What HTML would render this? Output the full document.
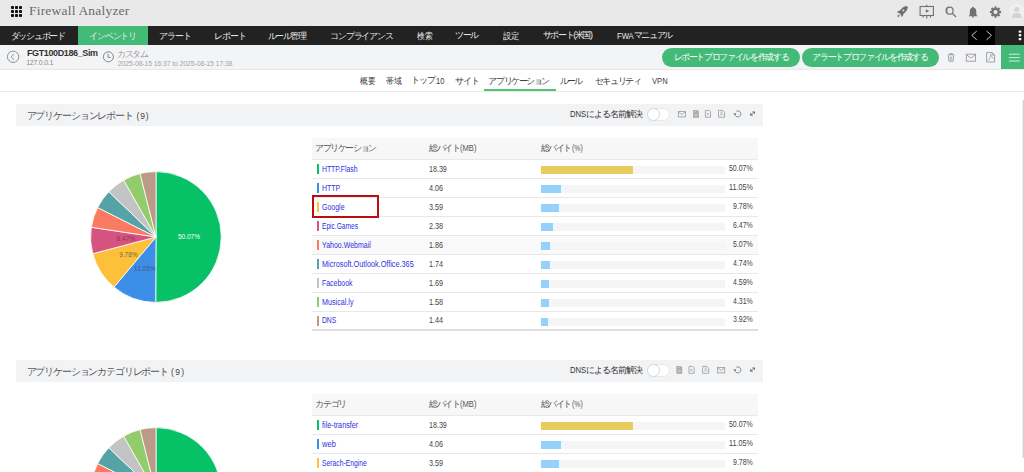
<!DOCTYPE html>
<html><head><meta charset="utf-8">
<style>
*{margin:0;padding:0;box-sizing:border-box}
html,body{width:1024px;height:472px;overflow:hidden;background:#fff;font-family:"Liberation Sans",sans-serif;color:#333}
.a{position:absolute;white-space:nowrap}
#top{position:absolute;left:0;top:0;width:1024px;height:26px;background:#e9e9ea}
#nav{position:absolute;left:0;top:26px;width:1024px;height:19px;background:#222}
#sub{position:absolute;left:0;top:45px;width:1024px;height:25px;background:#f3f4f6;border-bottom:1px solid #e9e9e9}
#tabs{position:absolute;left:0;top:70px;width:1024px;height:22px;border-bottom:1px solid #ebebeb;background:#fff}
.sech{position:absolute;left:16px;width:747px;height:22px;background:#f2f3f5}
.th{position:absolute;left:312px;width:446px;height:22px;background:#f7f7f7;border-bottom:1px solid #e8e8e8}
.row{position:absolute;left:312px;width:446px;height:19px;border-bottom:1px solid #e8e8e8}
.cb{position:absolute;left:317px;width:2px;height:10px}
.tr{position:absolute;left:541px;width:184px;height:8px;background:#f5f5f5}
.bar{position:absolute;left:0;top:0;height:8px}
.btn{position:absolute;height:19px;border-radius:10px;background:#43ba78}
.tog{position:absolute;left:647px;width:23px;height:13px;border-radius:6.5px;background:#fff;border:1px solid #e6e6e6}
.knob{position:absolute;left:-1px;top:-1px;width:13px;height:13px;border-radius:6.5px;background:#fff;border:1px solid #d9d9d9}
</style></head><body>
<div id="top">
  <svg class="a" style="left:11px;top:6px" width="11" height="11" viewBox="0 0 11 11"><g fill="#111"><rect x="0" y="0" width="3" height="3" rx="0.8"/><rect x="4" y="0" width="3" height="3" rx="0.8"/><rect x="8" y="0" width="3" height="3" rx="0.8"/><rect x="0" y="4" width="3" height="3" rx="0.8"/><rect x="4" y="4" width="3" height="3" rx="0.8"/><rect x="8" y="4" width="3" height="3" rx="0.8"/><rect x="0" y="8" width="3" height="3" rx="0.8"/><rect x="4" y="8" width="3" height="3" rx="0.8"/><rect x="8" y="8" width="3" height="3" rx="0.8"/></g></svg>
</div>
<div id="nav">
  <div class="a" style="left:78px;top:0;width:70px;height:19px;background:#43ba76"></div>
  <div class="a" style="left:968px;top:0;width:27px;height:19px;background:#000"></div>
</div>
<div id="sub">
  <div class="btn" style="left:662px;top:3px;width:138px"></div>
  <div class="btn" style="left:802px;top:3px;width:137px"></div>
  <div class="a" style="left:1001px;top:0;width:23px;height:24px;background:#43ba78"></div>
</div>
<div id="tabs">
  <div class="a" style="left:483.5px;top:19px;width:72.5px;height:2px;background:#52c373"></div>
</div>

<svg class="a" style="left:0;top:0" width="1024" height="70" viewBox="0 0 1024 70">
 <!-- rocket -->
 <g fill="#707070">
  <path d="M906.8 5.9 C903.8 6.3 901.4 8.2 899.9 10.6 L898.2 10.9 L896.9 12.6 L899.2 12.9 L901.0 14.7 L901.3 17.0 L903.0 15.7 L903.3 14.0 C905.6 12.5 907.5 10.0 907.9 7.0 Z"/>
  <circle cx="903.4" cy="10.4" r="0.9" fill="#e9e9ea"/>
  <path d="M899.3 14.2 L897.2 15.4 L897.6 16.9 L898.8 17.3 L900.0 15.0 Z" fill="#8a8a8a"/>
 </g>
 <!-- presentation -->
 <g fill="none" stroke="#707070" stroke-width="1.1">
  <rect x="920.1" y="6.5" width="13.3" height="9"/>
  <path d="M926.8 4.8 V6.5 M926.8 15.5 V18.5 M923.5 15.5 L922.8 17.5 M930.1 15.5 L930.8 17.5"/>
 </g>
 <path d="M925.8 9.2 L929.2 11 L925.8 12.8 Z" fill="#707070"/>
 <!-- search -->
 <g fill="none" stroke="#707070" stroke-width="1.2">
  <circle cx="949.6" cy="10.7" r="3.5"/>
  <path d="M952.2 13.3 L956 17"/>
  <path d="M948.2 8.6 A2.4 2.4 0 0 0 948.2 12.8" stroke-width="0.8"/>
 </g>
 <!-- bell -->
 <path d="M973 6.8 C973.6 6.8 973.9 7.3 973.9 7.8 C975.8 8.3 976.3 10.2 976.3 12 L976.4 14.8 L977.5 16.2 L968.6 16.2 L969.7 14.8 L969.8 12 C969.8 10.2 970.3 8.3 972.2 7.8 C972.2 7.3 972.5 6.8 973 6.8 Z M972 16.6 H974 V17.6 H972 Z" fill="#707070"/>
 <!-- gear -->
 <g transform="translate(995.5 12.1)" fill="#707070"><rect x="-1.1" y="-5.6" width="2.2" height="3" transform="rotate(0)"/><rect x="-1.1" y="-5.6" width="2.2" height="3" transform="rotate(45)"/><rect x="-1.1" y="-5.6" width="2.2" height="3" transform="rotate(90)"/><rect x="-1.1" y="-5.6" width="2.2" height="3" transform="rotate(135)"/><rect x="-1.1" y="-5.6" width="2.2" height="3" transform="rotate(180)"/><rect x="-1.1" y="-5.6" width="2.2" height="3" transform="rotate(225)"/><rect x="-1.1" y="-5.6" width="2.2" height="3" transform="rotate(270)"/><rect x="-1.1" y="-5.6" width="2.2" height="3" transform="rotate(315)"/><circle r="4.1"/><circle r="2.1" fill="#e9e9ea"/></g>
 <!-- avatar -->
 <circle cx="1016.8" cy="11.9" r="8.2" fill="#efefef"/>
 <circle cx="1016.8" cy="9.4" r="2.5" fill="#d3d3d3"/>
 <path d="M1011.8 17.5 C1011.8 14.4 1014 13 1016.8 13 C1019.6 13 1021.8 14.4 1021.8 17.5 C1020.5 18.5 1013.1 18.5 1011.8 17.5 Z" fill="#d3d3d3"/>
 <!-- nav chevrons -->
 <path d="M976.8 31 L971.8 35.4 L976.8 39.9 M986.5 31 L991.5 35.4 L986.5 39.9" fill="none" stroke="#c8c8c8" stroke-width="1"/>
 <g fill="#f4f4f4"><rect x="1018.6" y="30.4" width="2.8" height="2.3" rx="0.8"/><rect x="1018.6" y="34.1" width="2.8" height="2.3" rx="0.8"/><rect x="1018.6" y="37.9" width="2.8" height="2.3" rx="0.8"/></g>
 <!-- back circle -->
 <circle cx="13.1" cy="56.8" r="5.7" fill="none" stroke="#7a7a7a" stroke-width="0.8"/>
 <path d="M14.1 53.9 L11.1 56.85 L14.1 59.8" fill="none" stroke="#7a7a7a" stroke-width="0.8"/>
 <!-- clock -->
 <circle cx="108.4" cy="56.8" r="5" fill="none" stroke="#7a7a7a" stroke-width="0.9"/>
 <path d="M108.1 53.6 V57.4 H110.6" fill="none" stroke="#7a7a7a" stroke-width="0.9"/>
 <!-- trash -->
 <g fill="none" stroke="#9a9a9a" stroke-width="0.9">
  <path d="M947.6 54.8 H954.6 M949.8 54.8 V53.6 H952.4 V54.8"/>
  <path d="M948.4 55.6 L948.9 61.2 H953.1 L953.6 55.6"/>
  <path d="M950.3 56.5 V60.2 M951.7 56.5 V60.2" stroke-width="0.7"/>
 </g>
 <!-- mail -->
 <g fill="none" stroke="#9a9a9a" stroke-width="0.9">
  <rect x="966.3" y="54.2" width="9.2" height="7"/>
  <path d="M966.3 54.6 L970.9 58.2 L975.5 54.6"/>
 </g>
 <!-- pdf -->
 <g fill="none" stroke="#9a9a9a" stroke-width="0.9">
  <path d="M986.6 52.6 H992.2 L994.6 55 V62 H986.6 Z M992.2 52.6 V55 H994.6"/>
  <path d="M988 60.8 C989.5 59 990.8 56.5 990.6 54.4 C992 57 992.5 58 994 59.5" stroke-width="0.7"/>
 </g>
 <!-- hamburger -->
 <g stroke="#dff2e7" stroke-width="0.9"><path d="M1008.9 54.2 H1019.7 M1008.9 57.6 H1019.7 M1008.9 61 H1019.7"/></g>
</svg>
<div class="sech" style="top:103.5px"></div><div class="tog" style="top:107.5px"><div class="knob"></div></div><svg class="a" style="left:86.4px;top:166.7px" width="140" height="140" viewBox="-70 -70 140 140"><g font-family="Liberation Sans, sans-serif"><path d="M0 0L0.00 -65.40A65.4 65.4 0 1 1 -0.29 65.40Z" fill="#07c167" stroke="#fff" stroke-width="0.8" stroke-linejoin="round"/><path d="M0 0L-0.29 65.40A65.4 65.4 0 0 1 -42.07 50.08Z" fill="#3d8ee6" stroke="#fff" stroke-width="0.8" stroke-linejoin="round"/><path d="M0 0L-42.07 50.08A65.4 65.4 0 0 1 -63.24 16.66Z" fill="#fdc03a" stroke="#fff" stroke-width="0.8" stroke-linejoin="round"/><path d="M0 0L-63.24 16.66A65.4 65.4 0 0 1 -64.68 -9.70Z" fill="#d6527f" stroke="#fff" stroke-width="0.8" stroke-linejoin="round"/><path d="M0 0L-64.68 -9.70A65.4 65.4 0 0 1 -58.38 -29.47Z" fill="#fb7b62" stroke="#fff" stroke-width="0.8" stroke-linejoin="round"/><path d="M0 0L-58.38 -29.47A65.4 65.4 0 0 1 -47.17 -45.31Z" fill="#55a3a7" stroke="#fff" stroke-width="0.8" stroke-linejoin="round"/><path d="M0 0L-47.17 -45.31A65.4 65.4 0 0 1 -32.33 -56.85Z" fill="#c3c3c3" stroke="#fff" stroke-width="0.8" stroke-linejoin="round"/><path d="M0 0L-32.33 -56.85A65.4 65.4 0 0 1 -15.95 -63.43Z" fill="#92cc6c" stroke="#fff" stroke-width="0.8" stroke-linejoin="round"/><path d="M0 0L-15.95 -63.43A65.4 65.4 0 0 1 -0.00 -65.40Z" fill="#bd9a87" stroke="#fff" stroke-width="0.8" stroke-linejoin="round"/><text x="33" y="2.3" fill="#fff" font-size="6.5" text-anchor="middle">50.07%</text><text x="-11.2" y="33.5" fill="#3a4a6a" fill-opacity="0.8" font-size="6.5" text-anchor="middle">11.05%</text><text x="-27.6" y="19.8" fill="#4a4a3a" fill-opacity="0.8" font-size="6.5" text-anchor="middle">9.78%</text><text x="-30.2" y="4" fill="#5a3a4a" fill-opacity="0.8" font-size="6.5" text-anchor="middle">6.47%</text></g></svg><div class="a" style="left:312px;top:138px;width:446px;height:21px;background:#f7f7f7"></div><div class="a" style="left:312px;top:236px;width:446px;height:18px;background:#f9f9f9"></div><div class="a" style="left:312px;top:159px;width:446px;height:1px;background:#e8e8e8"></div><div class="a" style="left:312px;top:178px;width:446px;height:1px;background:#e8e8e8"></div><div class="a" style="left:312px;top:197px;width:446px;height:1px;background:#e8e8e8"></div><div class="a" style="left:312px;top:216px;width:446px;height:1px;background:#e8e8e8"></div><div class="a" style="left:312px;top:235px;width:446px;height:1px;background:#e8e8e8"></div><div class="a" style="left:312px;top:254px;width:446px;height:1px;background:#e8e8e8"></div><div class="a" style="left:312px;top:273px;width:446px;height:1px;background:#e8e8e8"></div><div class="a" style="left:312px;top:292px;width:446px;height:1px;background:#e8e8e8"></div><div class="a" style="left:312px;top:311px;width:446px;height:1px;background:#e8e8e8"></div><div class="a" style="left:312px;top:329px;width:446px;height:2px;background:#dedede"></div><div class="cb" style="top:164px;background:#07c167"></div><div class="tr" style="top:166px"><div class="bar" style="width:92.1px;background:#e8cd5e"></div></div><div class="cb" style="top:183px;background:#3d8ee6"></div><div class="tr" style="top:185px"><div class="bar" style="width:20.3px;background:#94d2fb"></div></div><div class="cb" style="top:202px;background:#fdc03a"></div><div class="tr" style="top:204px"><div class="bar" style="width:18.0px;background:#94d2fb"></div></div><div class="cb" style="top:221px;background:#d6527f"></div><div class="tr" style="top:223px"><div class="bar" style="width:11.9px;background:#94d2fb"></div></div><div class="cb" style="top:240px;background:#fb7b62"></div><div class="tr" style="top:242px"><div class="bar" style="width:9.3px;background:#94d2fb"></div></div><div class="cb" style="top:259px;background:#55a3a7"></div><div class="tr" style="top:261px"><div class="bar" style="width:8.7px;background:#94d2fb"></div></div><div class="cb" style="top:278px;background:#c3c3c3"></div><div class="tr" style="top:280px"><div class="bar" style="width:8.4px;background:#94d2fb"></div></div><div class="cb" style="top:297px;background:#92cc6c"></div><div class="tr" style="top:299px"><div class="bar" style="width:7.9px;background:#94d2fb"></div></div><div class="cb" style="top:316px;background:#bd9a87"></div><div class="tr" style="top:318px"><div class="bar" style="width:7.2px;background:#94d2fb"></div></div><div class="sech" style="top:359.5px"></div><div class="tog" style="top:363.5px"><div class="knob"></div></div><svg class="a" style="left:86.4px;top:422.7px" width="140" height="140" viewBox="-70 -70 140 140"><g font-family="Liberation Sans, sans-serif"><path d="M0 0L0.00 -65.40A65.4 65.4 0 1 1 -0.29 65.40Z" fill="#07c167" stroke="#fff" stroke-width="0.8" stroke-linejoin="round"/><path d="M0 0L-0.29 65.40A65.4 65.4 0 0 1 -42.07 50.08Z" fill="#3d8ee6" stroke="#fff" stroke-width="0.8" stroke-linejoin="round"/><path d="M0 0L-42.07 50.08A65.4 65.4 0 0 1 -63.24 16.66Z" fill="#fdc03a" stroke="#fff" stroke-width="0.8" stroke-linejoin="round"/><path d="M0 0L-63.24 16.66A65.4 65.4 0 0 1 -64.68 -9.70Z" fill="#d6527f" stroke="#fff" stroke-width="0.8" stroke-linejoin="round"/><path d="M0 0L-64.68 -9.70A65.4 65.4 0 0 1 -58.38 -29.47Z" fill="#fb7b62" stroke="#fff" stroke-width="0.8" stroke-linejoin="round"/><path d="M0 0L-58.38 -29.47A65.4 65.4 0 0 1 -47.17 -45.31Z" fill="#55a3a7" stroke="#fff" stroke-width="0.8" stroke-linejoin="round"/><path d="M0 0L-47.17 -45.31A65.4 65.4 0 0 1 -32.33 -56.85Z" fill="#c3c3c3" stroke="#fff" stroke-width="0.8" stroke-linejoin="round"/><path d="M0 0L-32.33 -56.85A65.4 65.4 0 0 1 -15.95 -63.43Z" fill="#92cc6c" stroke="#fff" stroke-width="0.8" stroke-linejoin="round"/><path d="M0 0L-15.95 -63.43A65.4 65.4 0 0 1 -0.00 -65.40Z" fill="#bd9a87" stroke="#fff" stroke-width="0.8" stroke-linejoin="round"/><text x="33" y="2.3" fill="#fff" font-size="6.5" text-anchor="middle">50.07%</text><text x="-11.2" y="33.5" fill="#3a4a6a" fill-opacity="0.8" font-size="6.5" text-anchor="middle">11.05%</text><text x="-27.6" y="19.8" fill="#4a4a3a" fill-opacity="0.8" font-size="6.5" text-anchor="middle">9.78%</text><text x="-30.2" y="4" fill="#5a3a4a" fill-opacity="0.8" font-size="6.5" text-anchor="middle">6.47%</text></g></svg><div class="a" style="left:312px;top:394px;width:446px;height:21px;background:#f7f7f7"></div><div class="a" style="left:312px;top:492px;width:446px;height:18px;background:#f9f9f9"></div><div class="a" style="left:312px;top:415px;width:446px;height:1px;background:#e8e8e8"></div><div class="a" style="left:312px;top:434px;width:446px;height:1px;background:#e8e8e8"></div><div class="a" style="left:312px;top:453px;width:446px;height:1px;background:#e8e8e8"></div><div class="a" style="left:312px;top:472px;width:446px;height:1px;background:#e8e8e8"></div><div class="a" style="left:312px;top:491px;width:446px;height:1px;background:#e8e8e8"></div><div class="a" style="left:312px;top:510px;width:446px;height:1px;background:#e8e8e8"></div><div class="a" style="left:312px;top:529px;width:446px;height:1px;background:#e8e8e8"></div><div class="a" style="left:312px;top:548px;width:446px;height:1px;background:#e8e8e8"></div><div class="a" style="left:312px;top:567px;width:446px;height:1px;background:#e8e8e8"></div><div class="a" style="left:312px;top:585px;width:446px;height:2px;background:#dedede"></div><div class="cb" style="top:420px;background:#07c167"></div><div class="tr" style="top:422px"><div class="bar" style="width:92.1px;background:#e8cd5e"></div></div><div class="cb" style="top:439px;background:#3d8ee6"></div><div class="tr" style="top:441px"><div class="bar" style="width:20.3px;background:#94d2fb"></div></div><div class="cb" style="top:458px;background:#fdc03a"></div><div class="tr" style="top:460px"><div class="bar" style="width:18.0px;background:#94d2fb"></div></div><div class="cb" style="top:477px;background:#d6527f"></div><div class="tr" style="top:479px"><div class="bar" style="width:11.9px;background:#94d2fb"></div></div><div class="cb" style="top:496px;background:#fb7b62"></div><div class="tr" style="top:498px"><div class="bar" style="width:9.3px;background:#94d2fb"></div></div><div class="cb" style="top:515px;background:#55a3a7"></div><div class="tr" style="top:517px"><div class="bar" style="width:8.7px;background:#94d2fb"></div></div><div class="cb" style="top:534px;background:#c3c3c3"></div><div class="tr" style="top:536px"><div class="bar" style="width:8.4px;background:#94d2fb"></div></div><div class="cb" style="top:553px;background:#92cc6c"></div><div class="tr" style="top:555px"><div class="bar" style="width:7.9px;background:#94d2fb"></div></div><div class="cb" style="top:572px;background:#bd9a87"></div><div class="tr" style="top:574px"><div class="bar" style="width:7.2px;background:#94d2fb"></div></div><svg class="a" style="left:0;top:0" width="1024" height="472" viewBox="0 0 1024 472"><g fill="none" stroke="#9a9a9a" stroke-width="0.8"><rect x="678.3" y="111.5" width="7.1" height="5.4"/><path d="M678.3 111.89999999999999 L681.85 114.5 L685.4 111.89999999999999"/></g><path d="M693.1 110 H697.3000000000001 L698.9 111.6 V117.7 H693.1 Z" fill="#a9a9a9"/><path d="M694.3000000000001 111.3 H696.5 M694.3000000000001 114 H697.7 M694.3000000000001 115.6 H697.7" stroke="#e4e4e4" stroke-width="0.6"/><path d="M705.4 110.4 H709 L710.5 111.9 V117.3 H705.4 Z" fill="none" stroke="#9a9a9a" stroke-width="0.8"/><path d="M707 113 L708.6 115.4 M708.6 113 L707 115.4" stroke="#9a9a9a" stroke-width="0.6"/><path d="M718.5 110.4 H722.9 L724.6 112.1 V117.3 H718.5 Z" fill="none" stroke="#9a9a9a" stroke-width="0.8"/><path d="M719.7 116.2 C720.7 115 721.4 113.4 721.3000000000001 111.6 C721.9 113.6 722.5 114.6 723.7 115.4" fill="none" stroke="#9a9a9a" stroke-width="0.6"/><path d="M734.9 114.2 A3 3 0 1 0 736.4 111.30000000000001" fill="none" stroke="#7a7a7a" stroke-width="0.9"/><path d="M733.5 113.30000000000001 L736.3 113.30000000000001 L734.9 115.5 Z" fill="#7a7a7a"/><path d="M752 111.4 H755 V114.4 Z" fill="#777"/><path d="M750.2 112.5 V115.7 H753.4 Z" fill="#777"/><path d="M751.2 114.7 L754 111.9" stroke="#777" stroke-width="0.8"/></svg><svg class="a" style="left:0;top:0" width="1024" height="472" viewBox="0 0 1024 472"><path d="M676.4 366 H680.6 L682.1999999999999 367.6 V373.7 H676.4 Z" fill="#a9a9a9"/><path d="M677.6 367.3 H679.8 M677.6 370 H681.0 M677.6 371.6 H681.0" stroke="#e4e4e4" stroke-width="0.6"/><path d="M689.0 366.4 H692.6 L694.1 367.9 V373.3 H689.0 Z" fill="none" stroke="#9a9a9a" stroke-width="0.8"/><path d="M690.6 369 L692.2 371.4 M692.2 369 L690.6 371.4" stroke="#9a9a9a" stroke-width="0.6"/><path d="M702.6 366.4 H707.0 L708.7 368.1 V373.3 H702.6 Z" fill="none" stroke="#9a9a9a" stroke-width="0.8"/><path d="M703.8000000000001 372.2 C704.8000000000001 371 705.5 369.4 705.4000000000001 367.6 C706.0 369.6 706.6 370.6 707.8000000000001 371.4" fill="none" stroke="#9a9a9a" stroke-width="0.6"/><g fill="none" stroke="#9a9a9a" stroke-width="0.8"><rect x="717.6" y="367.5" width="7.1" height="5.4"/><path d="M717.6 367.90000000000003 L721.1500000000001 370.5 L724.7 367.90000000000003"/></g><path d="M734.9 370.2 A3 3 0 1 0 736.4 367.29999999999995" fill="none" stroke="#7a7a7a" stroke-width="0.9"/><path d="M733.5 369.29999999999995 L736.3 369.29999999999995 L734.9 371.5 Z" fill="#7a7a7a"/><path d="M752 367.4 H755 V370.4 Z" fill="#777"/><path d="M750.2 368.5 V371.7 H753.4 Z" fill="#777"/><path d="M751.2 370.7 L754 367.9" stroke="#777" stroke-width="0.8"/></svg><div class="a" style="left:1022px;top:100px;width:1px;height:358px;background:#ededed"></div><div class="a" style="left:1023px;top:100px;width:1px;height:358px;background:#d2d2d2"></div><div class="a" style="left:312px;top:195px;width:67px;height:23px;border:2px solid #b80f0f"></div><div class="a" style="left:29.00px;top:1.90px;font-family:'Liberation Serif',serif;font-size:13.5px;font-weight:normal;letter-spacing:0.200px;line-height:17.55px;color:#6b6b6b">Firewall Analyzer</div><div class="a" style="left:10.70px;top:30.70px;font-family:'Liberation Sans',sans-serif;font-size:9px;font-weight:normal;letter-spacing:-1.267px;line-height:11.70px;color:#ececec">ダッシュボード</div><div class="a" style="left:89.20px;top:30.70px;font-family:'Liberation Sans',sans-serif;font-size:9px;font-weight:normal;letter-spacing:-1.200px;line-height:11.70px;color:#ececec">インベントリ</div><div class="a" style="left:158.80px;top:30.70px;font-family:'Liberation Sans',sans-serif;font-size:9px;font-weight:normal;letter-spacing:-0.933px;line-height:11.70px;color:#ececec">アラート</div><div class="a" style="left:213.60px;top:30.70px;font-family:'Liberation Sans',sans-serif;font-size:9px;font-weight:normal;letter-spacing:-0.867px;line-height:11.70px;color:#ececec">レポート</div><div class="a" style="left:267.75px;top:31.20px;font-family:'Liberation Sans',sans-serif;font-size:9px;font-weight:normal;letter-spacing:-1.425px;line-height:11.70px;color:#ececec">ルール管理</div><div class="a" style="left:330.25px;top:30.70px;font-family:'Liberation Sans',sans-serif;font-size:9px;font-weight:normal;letter-spacing:-1.214px;line-height:11.70px;color:#ececec">コンプライアンス</div><div class="a" style="left:416.70px;top:31.20px;font-family:'Liberation Sans',sans-serif;font-size:8.5px;font-weight:normal;letter-spacing:0.000px;transform:scaleX(0.8611);transform-origin:0 0;line-height:11.05px;color:#ececec">検索</div><div class="a" style="left:455.30px;top:30.20px;font-family:'Liberation Sans',sans-serif;font-size:9px;font-weight:normal;letter-spacing:-1.700px;line-height:11.70px;color:#ececec">ツール</div><div class="a" style="left:503.10px;top:30.70px;font-family:'Liberation Sans',sans-serif;font-size:8.5px;font-weight:normal;letter-spacing:0.000px;transform:scaleX(0.9176);transform-origin:0 0;line-height:11.05px;color:#ececec">設定</div><div class="a" style="left:542.70px;top:30.20px;font-family:'Liberation Sans',sans-serif;font-size:9px;font-weight:normal;letter-spacing:-1.371px;line-height:11.70px;color:#ececec">サポート(米国)</div><div class="a" style="left:633.90px;top:30.20px;font-family:'Liberation Sans',sans-serif;font-size:9px;font-weight:normal;letter-spacing:-1.450px;line-height:11.70px;color:#ececec">マニュアル</div><div class="a" style="left:617.20px;top:30.60px;font-family:'Liberation Sans',sans-serif;font-size:8.5px;font-weight:normal;letter-spacing:0.000px;transform:scaleX(0.9000);transform-origin:0 0;line-height:11.05px;color:#ececec">FWA</div><div class="a" style="left:27.00px;top:47.90px;font-family:'Liberation Sans',sans-serif;font-size:9px;font-weight:bold;letter-spacing:-0.385px;line-height:11.70px;color:#333">FGT100D186_Sim</div><div class="a" style="left:26.20px;top:58.05px;font-family:'Liberation Sans',sans-serif;font-size:7px;font-weight:normal;letter-spacing:-0.250px;line-height:9.10px;color:#8a8a8a">127.0.0.1</div><div class="a" style="left:116.80px;top:48.70px;font-family:'Liberation Sans',sans-serif;font-size:9px;font-weight:normal;letter-spacing:-1.200px;line-height:11.70px;color:#999">カスタム</div><div class="a" style="left:117.80px;top:58.80px;font-family:'Liberation Sans',sans-serif;font-size:7px;font-weight:normal;letter-spacing:-0.160px;line-height:9.10px;color:#a6a6a6">2025-08-15 16:37 to 2025-08-15 17:38</div><div class="a" style="left:673.50px;top:51.80px;font-family:'Liberation Sans',sans-serif;font-size:9px;font-weight:normal;letter-spacing:-1.343px;line-height:11.70px;color:#fff">レポートプロファイルを作成する</div><div class="a" style="left:812.30px;top:51.80px;font-family:'Liberation Sans',sans-serif;font-size:9px;font-weight:normal;letter-spacing:-1.329px;line-height:11.70px;color:#fff">アラートプロファイルを作成する</div><div class="a" style="left:360.00px;top:75.80px;font-family:'Liberation Sans',sans-serif;font-size:8.5px;font-weight:normal;letter-spacing:0.000px;transform:scaleX(0.8444);transform-origin:0 0;line-height:11.05px;color:#3a3a3a">概要</div><div class="a" style="left:386.20px;top:75.80px;font-family:'Liberation Sans',sans-serif;font-size:8.5px;font-weight:normal;letter-spacing:0.000px;transform:scaleX(0.8667);transform-origin:0 0;line-height:11.05px;color:#3a3a3a">帯域</div><div class="a" style="left:411.20px;top:75.30px;font-family:'Liberation Sans',sans-serif;font-size:9px;font-weight:normal;letter-spacing:-1.300px;line-height:11.70px;color:#3a3a3a">トップ</div><div class="a" style="left:455.40px;top:75.80px;font-family:'Liberation Sans',sans-serif;font-size:9px;font-weight:normal;letter-spacing:-1.200px;line-height:11.70px;color:#3a3a3a">サイト</div><div class="a" style="left:488.40px;top:75.80px;font-family:'Liberation Sans',sans-serif;font-size:9px;font-weight:normal;letter-spacing:-1.429px;line-height:11.70px;color:#3a3a3a">アプリケーション</div><div class="a" style="left:560.00px;top:75.80px;font-family:'Liberation Sans',sans-serif;font-size:9px;font-weight:normal;letter-spacing:-2.000px;line-height:11.70px;color:#3a3a3a">ルール</div><div class="a" style="left:594.60px;top:75.80px;font-family:'Liberation Sans',sans-serif;font-size:9px;font-weight:normal;letter-spacing:-1.360px;line-height:11.70px;color:#3a3a3a">セキュリティ</div><div class="a" style="left:436.30px;top:75.90px;font-family:'Liberation Sans',sans-serif;font-size:8.5px;font-weight:normal;letter-spacing:0.000px;transform:scaleX(0.8889);transform-origin:0 0;line-height:11.05px;color:#3a3a3a">10</div><div class="a" style="left:652.30px;top:75.60px;font-family:'Liberation Sans',sans-serif;font-size:8.5px;font-weight:normal;letter-spacing:0.000px;transform:scaleX(0.8941);transform-origin:0 0;line-height:11.05px;color:#3a3a3a">VPN</div><div class="a" style="left:26.50px;top:108.50px;font-family:'Liberation Sans',sans-serif;font-size:10px;font-weight:normal;letter-spacing:-1.127px;line-height:13.00px;color:#555">アプリケーションレポート</div><div class="a" style="left:136.50px;top:110.70px;font-family:'Liberation Sans',sans-serif;font-size:8.5px;font-weight:normal;letter-spacing:0.900px;line-height:11.05px;color:#444">(9)</div><div class="a" style="left:569.70px;top:109.10px;font-family:'Liberation Sans',sans-serif;font-size:9px;font-weight:normal;letter-spacing:0.000px;transform:scaleX(0.8526);transform-origin:0 0;line-height:11.70px;color:#333">DNS</div><div class="a" style="left:586.10px;top:108.60px;font-family:'Liberation Sans',sans-serif;font-size:9px;font-weight:normal;letter-spacing:-0.933px;line-height:11.70px;color:#333">による名前解決</div><div class="a" style="left:315.10px;top:142.75px;font-family:'Liberation Sans',sans-serif;font-size:8.5px;font-weight:normal;letter-spacing:-1.400px;line-height:11.05px;color:#555">アプリケーション</div><div class="a" style="left:429.20px;top:142.60px;font-family:'Liberation Sans',sans-serif;font-size:8.5px;font-weight:normal;letter-spacing:-1.400px;line-height:11.05px;color:#555">総バイト</div><div class="a" style="left:460.00px;top:143.40px;font-family:'Liberation Sans',sans-serif;font-size:8.5px;font-weight:normal;letter-spacing:0.000px;transform:scaleX(0.8944);transform-origin:0 0;line-height:11.05px;color:#555">(MB)</div><div class="a" style="left:540.90px;top:142.60px;font-family:'Liberation Sans',sans-serif;font-size:8.5px;font-weight:normal;letter-spacing:-1.467px;line-height:11.05px;color:#555">総バイト</div><div class="a" style="left:571.60px;top:143.40px;font-family:'Liberation Sans',sans-serif;font-size:8.5px;font-weight:normal;letter-spacing:0.000px;transform:scaleX(0.8077);transform-origin:0 0;line-height:11.05px;color:#555">(%)</div><div class="a" style="left:26.50px;top:364.50px;font-family:'Liberation Sans',sans-serif;font-size:10px;font-weight:normal;letter-spacing:-1.160px;line-height:13.00px;color:#555">アプリケーションカテゴリレポート</div><div class="a" style="left:171.00px;top:366.70px;font-family:'Liberation Sans',sans-serif;font-size:8.5px;font-weight:normal;letter-spacing:1.300px;line-height:11.05px;color:#444">(9)</div><div class="a" style="left:569.70px;top:365.10px;font-family:'Liberation Sans',sans-serif;font-size:9px;font-weight:normal;letter-spacing:0.000px;transform:scaleX(0.8526);transform-origin:0 0;line-height:11.70px;color:#333">DNS</div><div class="a" style="left:586.10px;top:364.60px;font-family:'Liberation Sans',sans-serif;font-size:9px;font-weight:normal;letter-spacing:-0.933px;line-height:11.70px;color:#333">による名前解決</div><div class="a" style="left:315.10px;top:398.75px;font-family:'Liberation Sans',sans-serif;font-size:8.5px;font-weight:normal;letter-spacing:-1.200px;line-height:11.05px;color:#555">カテゴリ</div><div class="a" style="left:429.20px;top:398.60px;font-family:'Liberation Sans',sans-serif;font-size:8.5px;font-weight:normal;letter-spacing:-1.400px;line-height:11.05px;color:#555">総バイト</div><div class="a" style="left:460.00px;top:399.40px;font-family:'Liberation Sans',sans-serif;font-size:8.5px;font-weight:normal;letter-spacing:0.000px;transform:scaleX(0.8944);transform-origin:0 0;line-height:11.05px;color:#555">(MB)</div><div class="a" style="left:540.90px;top:398.60px;font-family:'Liberation Sans',sans-serif;font-size:8.5px;font-weight:normal;letter-spacing:-1.467px;line-height:11.05px;color:#555">総バイト</div><div class="a" style="left:571.60px;top:399.40px;font-family:'Liberation Sans',sans-serif;font-size:8.5px;font-weight:normal;letter-spacing:0.000px;transform:scaleX(0.8077);transform-origin:0 0;line-height:11.05px;color:#555">(%)</div><div class="a" style="left:321.80px;top:163.80px;font-family:'Liberation Sans',sans-serif;font-size:8.5px;font-weight:normal;letter-spacing:0.000px;transform:scaleX(0.8045);transform-origin:0 0;line-height:11.05px;color:#2f2fe0">HTTP.Flash</div><div class="a" style="left:429.40px;top:163.80px;font-family:'Liberation Sans',sans-serif;font-size:8.5px;font-weight:normal;letter-spacing:0.000px;transform:scaleX(0.8381);transform-origin:0 0;line-height:11.05px;color:#444">18.39</div><div class="a" style="left:728.70px;top:162.90px;font-family:'Liberation Sans',sans-serif;font-size:8.5px;font-weight:normal;letter-spacing:0.000px;transform:scaleX(0.8172);transform-origin:0 0;line-height:11.05px;color:#444">50.07%</div><div class="a" style="left:321.80px;top:182.80px;font-family:'Liberation Sans',sans-serif;font-size:8.5px;font-weight:normal;letter-spacing:0.000px;transform:scaleX(0.8182);transform-origin:0 0;line-height:11.05px;color:#2f2fe0">HTTP</div><div class="a" style="left:429.40px;top:182.80px;font-family:'Liberation Sans',sans-serif;font-size:8.5px;font-weight:normal;letter-spacing:0.000px;transform:scaleX(0.8500);transform-origin:0 0;line-height:11.05px;color:#444">4.06</div><div class="a" style="left:728.70px;top:181.90px;font-family:'Liberation Sans',sans-serif;font-size:8.5px;font-weight:normal;letter-spacing:0.000px;transform:scaleX(0.8464);transform-origin:0 0;line-height:11.05px;color:#444">11.05%</div><div class="a" style="left:321.80px;top:201.80px;font-family:'Liberation Sans',sans-serif;font-size:8.5px;font-weight:normal;letter-spacing:0.000px;transform:scaleX(0.8222);transform-origin:0 0;line-height:11.05px;color:#2f2fe0">Google</div><div class="a" style="left:429.40px;top:201.80px;font-family:'Liberation Sans',sans-serif;font-size:8.5px;font-weight:normal;letter-spacing:0.000px;transform:scaleX(0.8500);transform-origin:0 0;line-height:11.05px;color:#444">3.59</div><div class="a" style="left:732.70px;top:200.90px;font-family:'Liberation Sans',sans-serif;font-size:8.5px;font-weight:normal;letter-spacing:0.000px;transform:scaleX(0.8208);transform-origin:0 0;line-height:11.05px;color:#444">9.78%</div><div class="a" style="left:321.80px;top:220.80px;font-family:'Liberation Sans',sans-serif;font-size:8.5px;font-weight:normal;letter-spacing:0.000px;transform:scaleX(0.7783);transform-origin:0 0;line-height:11.05px;color:#2f2fe0">Epic.Games</div><div class="a" style="left:429.40px;top:220.80px;font-family:'Liberation Sans',sans-serif;font-size:8.5px;font-weight:normal;letter-spacing:0.000px;transform:scaleX(0.8500);transform-origin:0 0;line-height:11.05px;color:#444">2.38</div><div class="a" style="left:732.70px;top:219.90px;font-family:'Liberation Sans',sans-serif;font-size:8.5px;font-weight:normal;letter-spacing:0.000px;transform:scaleX(0.8208);transform-origin:0 0;line-height:11.05px;color:#444">6.47%</div><div class="a" style="left:321.80px;top:239.80px;font-family:'Liberation Sans',sans-serif;font-size:8.5px;font-weight:normal;letter-spacing:0.000px;transform:scaleX(0.8237);transform-origin:0 0;line-height:11.05px;color:#2f2fe0">Yahoo.Webmail</div><div class="a" style="left:429.40px;top:239.80px;font-family:'Liberation Sans',sans-serif;font-size:8.5px;font-weight:normal;letter-spacing:0.000px;transform:scaleX(0.8500);transform-origin:0 0;line-height:11.05px;color:#444">1.86</div><div class="a" style="left:732.70px;top:238.90px;font-family:'Liberation Sans',sans-serif;font-size:8.5px;font-weight:normal;letter-spacing:0.000px;transform:scaleX(0.8208);transform-origin:0 0;line-height:11.05px;color:#444">5.07%</div><div class="a" style="left:321.80px;top:258.80px;font-family:'Liberation Sans',sans-serif;font-size:8.5px;font-weight:normal;letter-spacing:0.000px;transform:scaleX(0.8561);transform-origin:0 0;line-height:11.05px;color:#2f2fe0">Microsoft.Outlook.Office.365</div><div class="a" style="left:429.40px;top:258.80px;font-family:'Liberation Sans',sans-serif;font-size:8.5px;font-weight:normal;letter-spacing:0.000px;transform:scaleX(0.8500);transform-origin:0 0;line-height:11.05px;color:#444">1.74</div><div class="a" style="left:732.70px;top:257.90px;font-family:'Liberation Sans',sans-serif;font-size:8.5px;font-weight:normal;letter-spacing:0.000px;transform:scaleX(0.8208);transform-origin:0 0;line-height:11.05px;color:#444">4.74%</div><div class="a" style="left:321.80px;top:277.80px;font-family:'Liberation Sans',sans-serif;font-size:8.5px;font-weight:normal;letter-spacing:0.000px;transform:scaleX(0.8162);transform-origin:0 0;line-height:11.05px;color:#2f2fe0">Facebook</div><div class="a" style="left:429.40px;top:277.80px;font-family:'Liberation Sans',sans-serif;font-size:8.5px;font-weight:normal;letter-spacing:0.000px;transform:scaleX(0.8500);transform-origin:0 0;line-height:11.05px;color:#444">1.69</div><div class="a" style="left:732.70px;top:276.90px;font-family:'Liberation Sans',sans-serif;font-size:8.5px;font-weight:normal;letter-spacing:0.000px;transform:scaleX(0.8208);transform-origin:0 0;line-height:11.05px;color:#444">4.59%</div><div class="a" style="left:321.80px;top:296.80px;font-family:'Liberation Sans',sans-serif;font-size:8.5px;font-weight:normal;letter-spacing:0.000px;transform:scaleX(0.8432);transform-origin:0 0;line-height:11.05px;color:#2f2fe0">Musical.ly</div><div class="a" style="left:429.40px;top:296.80px;font-family:'Liberation Sans',sans-serif;font-size:8.5px;font-weight:normal;letter-spacing:0.000px;transform:scaleX(0.8500);transform-origin:0 0;line-height:11.05px;color:#444">1.58</div><div class="a" style="left:732.70px;top:295.90px;font-family:'Liberation Sans',sans-serif;font-size:8.5px;font-weight:normal;letter-spacing:0.000px;transform:scaleX(0.8208);transform-origin:0 0;line-height:11.05px;color:#444">4.31%</div><div class="a" style="left:321.80px;top:315.30px;font-family:'Liberation Sans',sans-serif;font-size:8.5px;font-weight:normal;letter-spacing:0.000px;transform:scaleX(0.7889);transform-origin:0 0;line-height:11.05px;color:#2f2fe0">DNS</div><div class="a" style="left:429.40px;top:315.30px;font-family:'Liberation Sans',sans-serif;font-size:8.5px;font-weight:normal;letter-spacing:0.000px;transform:scaleX(0.8500);transform-origin:0 0;line-height:11.05px;color:#444">1.44</div><div class="a" style="left:732.70px;top:314.40px;font-family:'Liberation Sans',sans-serif;font-size:8.5px;font-weight:normal;letter-spacing:0.000px;transform:scaleX(0.8208);transform-origin:0 0;line-height:11.05px;color:#444">3.92%</div><div class="a" style="left:321.80px;top:419.80px;font-family:'Liberation Sans',sans-serif;font-size:8.5px;font-weight:normal;letter-spacing:0.000px;transform:scaleX(0.8535);transform-origin:0 0;line-height:11.05px;color:#2f2fe0">file-transfer</div><div class="a" style="left:429.40px;top:419.80px;font-family:'Liberation Sans',sans-serif;font-size:8.5px;font-weight:normal;letter-spacing:0.000px;transform:scaleX(0.8381);transform-origin:0 0;line-height:11.05px;color:#444">18.39</div><div class="a" style="left:728.70px;top:418.90px;font-family:'Liberation Sans',sans-serif;font-size:8.5px;font-weight:normal;letter-spacing:0.000px;transform:scaleX(0.8172);transform-origin:0 0;line-height:11.05px;color:#444">50.07%</div><div class="a" style="left:321.80px;top:438.80px;font-family:'Liberation Sans',sans-serif;font-size:8.5px;font-weight:normal;letter-spacing:0.000px;transform:scaleX(0.8867);transform-origin:0 0;line-height:11.05px;color:#2f2fe0">web</div><div class="a" style="left:429.40px;top:438.80px;font-family:'Liberation Sans',sans-serif;font-size:8.5px;font-weight:normal;letter-spacing:0.000px;transform:scaleX(0.8500);transform-origin:0 0;line-height:11.05px;color:#444">4.06</div><div class="a" style="left:728.70px;top:437.90px;font-family:'Liberation Sans',sans-serif;font-size:8.5px;font-weight:normal;letter-spacing:0.000px;transform:scaleX(0.8464);transform-origin:0 0;line-height:11.05px;color:#444">11.05%</div><div class="a" style="left:321.80px;top:457.80px;font-family:'Liberation Sans',sans-serif;font-size:8.5px;font-weight:normal;letter-spacing:0.000px;transform:scaleX(0.7946);transform-origin:0 0;line-height:11.05px;color:#2f2fe0">Serach-Engine</div><div class="a" style="left:429.40px;top:457.80px;font-family:'Liberation Sans',sans-serif;font-size:8.5px;font-weight:normal;letter-spacing:0.000px;transform:scaleX(0.8500);transform-origin:0 0;line-height:11.05px;color:#444">3.59</div><div class="a" style="left:732.70px;top:456.90px;font-family:'Liberation Sans',sans-serif;font-size:8.5px;font-weight:normal;letter-spacing:0.000px;transform:scaleX(0.8208);transform-origin:0 0;line-height:11.05px;color:#444">9.78%</div>
</body></html>
